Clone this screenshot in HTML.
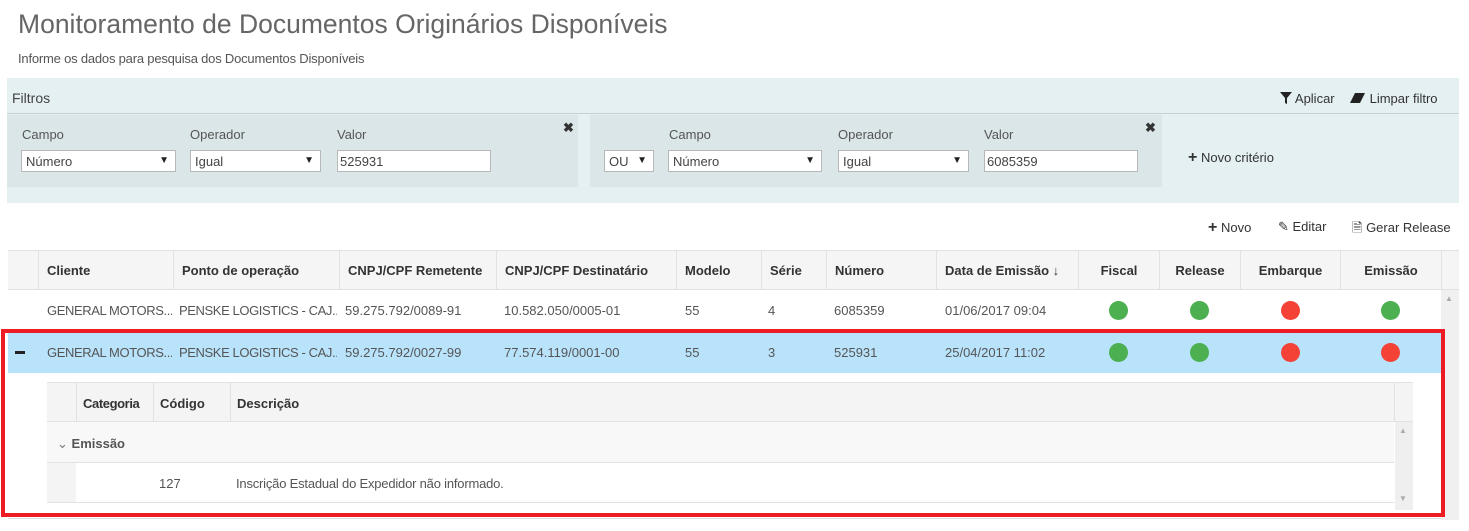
<!DOCTYPE html>
<html><head><meta charset="utf-8"><style>
*{box-sizing:border-box;margin:0;padding:0}
body{width:1469px;height:531px;background:#fff;font-family:"Liberation Sans",sans-serif;color:#333;position:relative;overflow:hidden;font-size:13px}
.a{position:absolute;white-space:nowrap}
.sel{position:absolute;height:22px;background:#fff;border:1px solid #b8b8b8;font-size:13px;padding:3px 4px;color:#444}
.sel i{position:absolute;right:6px;top:4px;font-style:normal;font-size:10px;color:#222}
.lbl{position:absolute;font-size:13px;color:#555}
.th{position:absolute;top:251px;height:39px;border-left:1px solid #e2e2e2;font-weight:bold;font-size:13px;padding:12px 8px;color:#333}
.td{position:absolute;font-size:13px;color:#555;white-space:nowrap}
.tr{overflow:hidden;letter-spacing:-0.4px}
.dot{position:absolute;width:19px;height:19px;border-radius:50%}
.g{background:#4caf50}.r{background:#f44336}
</style></head><body>
<div class="a" style="left:18px;top:9px;font-size:26.5px;color:#666">Monitoramento de Documentos Originários Disponíveis</div>
<div class="a" style="left:18px;top:51px;font-size:13px;color:#555;letter-spacing:-0.2px">Informe os dados para pesquisa dos Documentos Disponíveis</div>

<div class="a" style="left:7px;top:78px;width:1452px;height:125px;background:#e5f0f3"></div>
<div class="a" style="left:7px;top:113px;width:1452px;height:1px;background:#c8d0d2"></div>
<div class="a" style="left:12px;top:90px;font-size:14px;color:#444">Filtros</div>
<div class="a" style="left:1280px;top:91px;font-size:13px;color:#333"><svg width="12" height="12" viewBox="0 0 12 12" style="vertical-align:-1px"><path d="M0 0H12L7 6V12L5 11V6Z" fill="#222"/></svg> Aplicar</div>
<div class="a" style="left:1350px;top:91px;font-size:13px;color:#333"><svg width="16" height="12" viewBox="0 0 16 12" style="vertical-align:-1px"><path d="M5 1H15L10 11H0Z" fill="#222"/></svg> Limpar filtro</div>

<div class="a" style="left:7px;top:115px;width:571px;height:72px;background:#dbe6e9"></div>
<div class="lbl" style="left:22px;top:127px">Campo</div>
<div class="lbl" style="left:190px;top:127px">Operador</div>
<div class="lbl" style="left:337px;top:127px">Valor</div>
<div class="sel" style="left:21px;top:150px;width:155px">Número<i>▼</i></div>
<div class="sel" style="left:190px;top:150px;width:131px">Igual<i>▼</i></div>
<div class="sel" style="left:337px;top:150px;width:154px;padding-left:2px">525931</div>
<div class="a" style="left:563px;top:120px;font-size:13px;font-weight:bold">✖</div>

<div class="a" style="left:590px;top:115px;width:572px;height:72px;background:#dbe6e9"></div>
<div class="sel" style="left:604px;top:150px;width:50px">OU<i>▼</i></div>
<div class="lbl" style="left:669px;top:127px">Campo</div>
<div class="lbl" style="left:838px;top:127px">Operador</div>
<div class="lbl" style="left:984px;top:127px">Valor</div>
<div class="sel" style="left:668px;top:150px;width:154px">Número<i>▼</i></div>
<div class="sel" style="left:838px;top:150px;width:131px">Igual<i>▼</i></div>
<div class="sel" style="left:984px;top:150px;width:154px;padding-left:2px">6085359</div>
<div class="a" style="left:1145px;top:120px;font-size:13px;font-weight:bold">✖</div>
<div class="a" style="left:1188px;top:149px;font-size:13px;color:#333"><b style="font-size:16px">+</b> Novo critério</div>

<div class="a" style="left:1208px;top:219px;font-size:13px"><b style="font-size:16px">+</b> Novo</div>
<div class="a" style="left:1278px;top:219px;font-size:13px">✎ Editar</div>
<div class="a" style="left:1352px;top:219px;font-size:13px">🗎 Gerar Release</div>

<div class="a" style="left:8px;top:250px;width:1451px;height:40px;background:#f5f5f5;border-top:1px solid #e2e2e2;border-bottom:1px solid #e2e2e2"></div>
<div class="th" style="left:38px">Cliente</div>
<div class="th" style="left:173px">Ponto de operação</div>
<div class="th" style="left:339px">CNPJ/CPF Remetente</div>
<div class="th" style="left:496px">CNPJ/CPF Destinatário</div>
<div class="th" style="left:676px">Modelo</div>
<div class="th" style="left:761px">Série</div>
<div class="th" style="left:826px">Número</div>
<div class="th" style="left:936px;width:142px">Data de Emissão <span style="font-weight:normal">↓</span></div>
<div class="th" style="left:1078px;width:81px;text-align:center">Fiscal</div>
<div class="th" style="left:1159px;width:81px;text-align:center">Release</div>
<div class="th" style="left:1240px;width:100px;text-align:center">Embarque</div>
<div class="th" style="left:1340px;width:101px;text-align:center">Emissão</div>
<div class="th" style="left:1441px;width:18px"></div>

<div class="a" style="left:1441px;top:290px;width:18px;height:230px;background:#f0f0f0"></div>
<div class="a" style="left:1445px;top:294px;font-size:8px;color:#aaa">▲</div>

<div class="td tr" style="left:47px;top:303px;width:125px">GENERAL MOTORS...</div>
<div class="td tr" style="left:179px;top:303px;width:158px">PENSKE LOGISTICS - CAJ...</div>
<div class="td" style="left:345px;top:303px">59.275.792/0089-91</div>
<div class="td" style="left:504px;top:303px">10.582.050/0005-01</div>
<div class="td" style="left:685px;top:303px">55</div>
<div class="td" style="left:768px;top:303px">4</div>
<div class="td" style="left:834px;top:303px">6085359</div>
<div class="td" style="left:945px;top:303px">01/06/2017 09:04</div>
<div class="dot g" style="left:1109px;top:301px"></div>
<div class="dot g" style="left:1190px;top:301px"></div>
<div class="dot r" style="left:1281px;top:301px"></div>
<div class="dot g" style="left:1381px;top:301px"></div>

<div class="a" style="left:8px;top:332px;width:1433px;height:41px;background:#b9e3fb"></div>
<div class="a" style="left:15px;top:351px;width:10px;height:3px;background:#222"></div>
<div class="td tr" style="left:47px;top:345px;width:125px">GENERAL MOTORS...</div>
<div class="td tr" style="left:179px;top:345px;width:158px">PENSKE LOGISTICS - CAJ...</div>
<div class="td" style="left:345px;top:345px">59.275.792/0027-99</div>
<div class="td" style="left:504px;top:345px">77.574.119/0001-00</div>
<div class="td" style="left:685px;top:345px">55</div>
<div class="td" style="left:768px;top:345px">3</div>
<div class="td" style="left:834px;top:345px">525931</div>
<div class="td" style="left:945px;top:345px">25/04/2017 11:02</div>
<div class="dot g" style="left:1109px;top:343px"></div>
<div class="dot g" style="left:1190px;top:343px"></div>
<div class="dot r" style="left:1281px;top:343px"></div>
<div class="dot r" style="left:1381px;top:343px"></div>

<div class="a" style="left:47px;top:382px;width:1366px;height:40px;background:#f4f4f4;border-top:1px solid #e2e2e2;border-bottom:1px solid #e2e2e2"></div>
<div class="a" style="left:76px;top:382px;width:1px;height:40px;background:#e2e2e2"></div>
<div class="a" style="left:153px;top:382px;width:1px;height:40px;background:#e2e2e2"></div>
<div class="a" style="left:230px;top:382px;width:1px;height:40px;background:#e2e2e2"></div>
<div class="a" style="left:1394px;top:382px;width:1px;height:40px;background:#e2e2e2"></div>
<div class="td" style="left:83px;top:396px;font-weight:bold;color:#333;letter-spacing:-0.4px">Categoria</div>
<div class="td" style="left:160px;top:396px;font-weight:bold;color:#333">Código</div>
<div class="td" style="left:237px;top:396px;font-weight:bold;color:#333">Descrição</div>
<div class="a" style="left:47px;top:422px;width:1347px;height:41px;background:#f8f8f8;border-bottom:1px solid #e2e2e2"></div>
<div class="td" style="left:57px;top:436px;font-weight:bold;color:#555"><span style="font-weight:normal;color:#777">⌄</span> Emissão</div>
<div class="a" style="left:47px;top:463px;width:29px;height:39px;background:#f4f4f4"></div>
<div class="a" style="left:47px;top:502px;width:1347px;height:1px;background:#e2e2e2"></div>
<div class="td" style="left:159px;top:476px">127</div>
<div class="td" style="left:236px;top:476px;letter-spacing:-0.2px">Inscrição Estadual do Expedidor não informado.</div>
<div class="a" style="left:1395px;top:422px;width:18px;height:88px;background:#efefef"></div>
<div class="a" style="left:1399px;top:426px;font-size:8px;color:#aaa">▲</div>
<div class="a" style="left:1399px;top:494px;font-size:8px;color:#aaa">▼</div>
<div class="a" style="left:8px;top:518px;width:1433px;height:1px;background:#ddd"></div>

<div class="a" style="left:1px;top:329px;width:1444px;height:188px;border:4px solid #ed1c24"></div>
</body></html>
